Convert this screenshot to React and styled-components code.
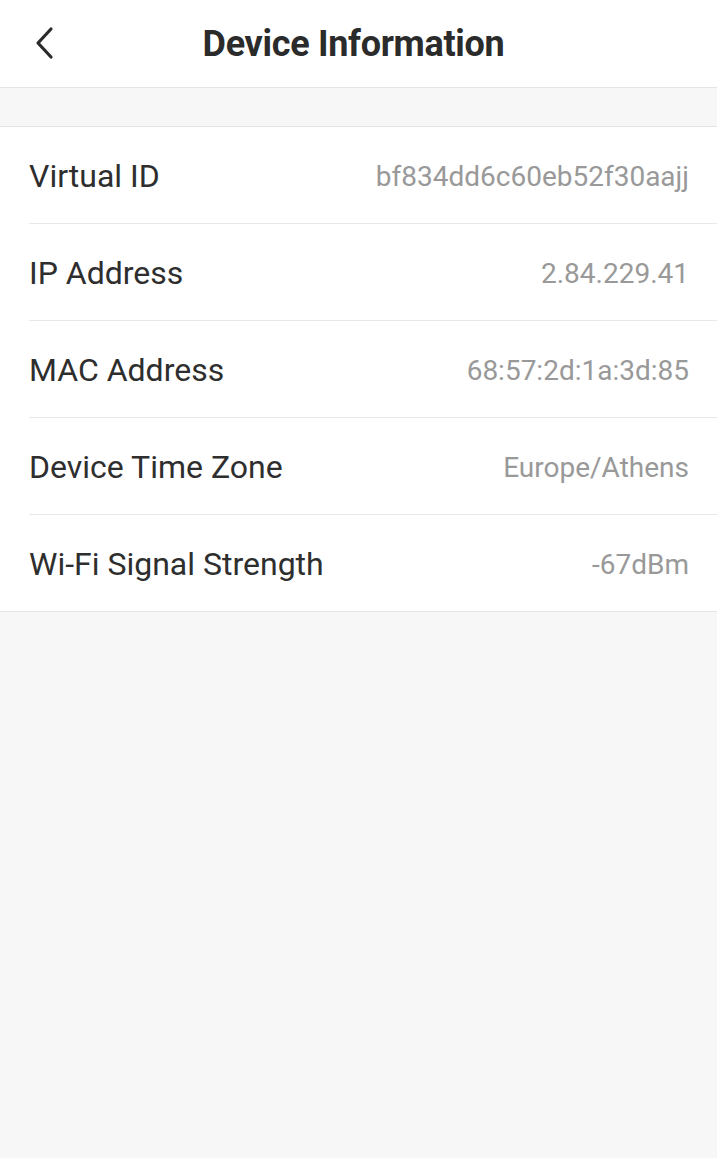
import React from 'react';
import styled, { createGlobalStyle } from 'styled-components';

const GlobalStyle = createGlobalStyle`
    html, body {
        margin: 0;
        padding: 0;
        background: #f7f7f7;
        font-family: Roboto, "Noto Sans", sans-serif;
    }
`;

const Page = styled.div`
    min-height: 1158px;
    background: #f7f7f7;
`;

const Header = styled.header`
    height: 87px;
    display: flex;
    align-items: center;
    justify-content: center;
    padding-right: 10px;
    position: relative;
    background: #fff;
    border-bottom: 1px solid #e4e4e4;
`;

const BackButton = styled.button`
    position: absolute;
    left: 24px;
    top: 22px;
    width: 40px;
    height: 42px;
    padding: 0;
    border: none;
    background: none;
    display: flex;
    align-items: center;
    justify-content: center;
`;

const Title = styled.h1`
    margin: 0;
    font-size: 36px;
    font-weight: 700;
    color: #2b2b2b;
    letter-spacing: -0.3px;
`;

const Spacer = styled.div`
    height: 38px;
    border-bottom: 1px solid #e4e4e4;
`;

const List = styled.ul`
    margin: 0;
    padding: 0 0 0 29px;
    list-style: none;
    background: #fff;
    border-bottom: 1px solid #e4e4e4;
`;

const Row = styled.li`
    display: flex;
    align-items: center;
    justify-content: space-between;
    padding: 2px 28px 0 0;
    box-sizing: border-box;
    height: ${p => (p.$last ? '96px' : '97px')};
    border-bottom: ${p => (p.$last ? 'none' : '1px solid #e8e8e8')};
`;

const Label = styled.span`
    font-size: 32px;
    color: #2e2e2e;
`;

const Value = styled.span`
    font-size: 28px;
    color: #999;
`;

const rows = [
    ['Virtual ID', 'bf834dd6c60eb52f30aajj'],
    ['IP Address', '2.84.229.41'],
    ['MAC Address', '68:57:2d:1a:3d:85'],
    ['Device Time Zone', 'Europe/Athens'],
    ['Wi-Fi Signal Strength', '-67dBm'],
];

export default function App() {
    return (
        <Page>
            <GlobalStyle />
            <Header>
                <BackButton aria-label="Back">
                    <svg width="24" height="34" viewBox="0 0 24 34" fill="none">
                        <path d="M19 3 L6 17 L19 31" stroke="#2b2b2b" strokeWidth="3.2" strokeLinecap="round" strokeLinejoin="round" />
                    </svg>
                </BackButton>
                <Title>Device Information</Title>
            </Header>
            <Spacer />
            <List>
                {rows.map(([label, value], i) => (
                    <Row key={label} $last={i === rows.length - 1}>
                        <Label>{label}</Label>
                        <Value>{value}</Value>
                    </Row>
                ))}
            </List>
        </Page>
    );
}
